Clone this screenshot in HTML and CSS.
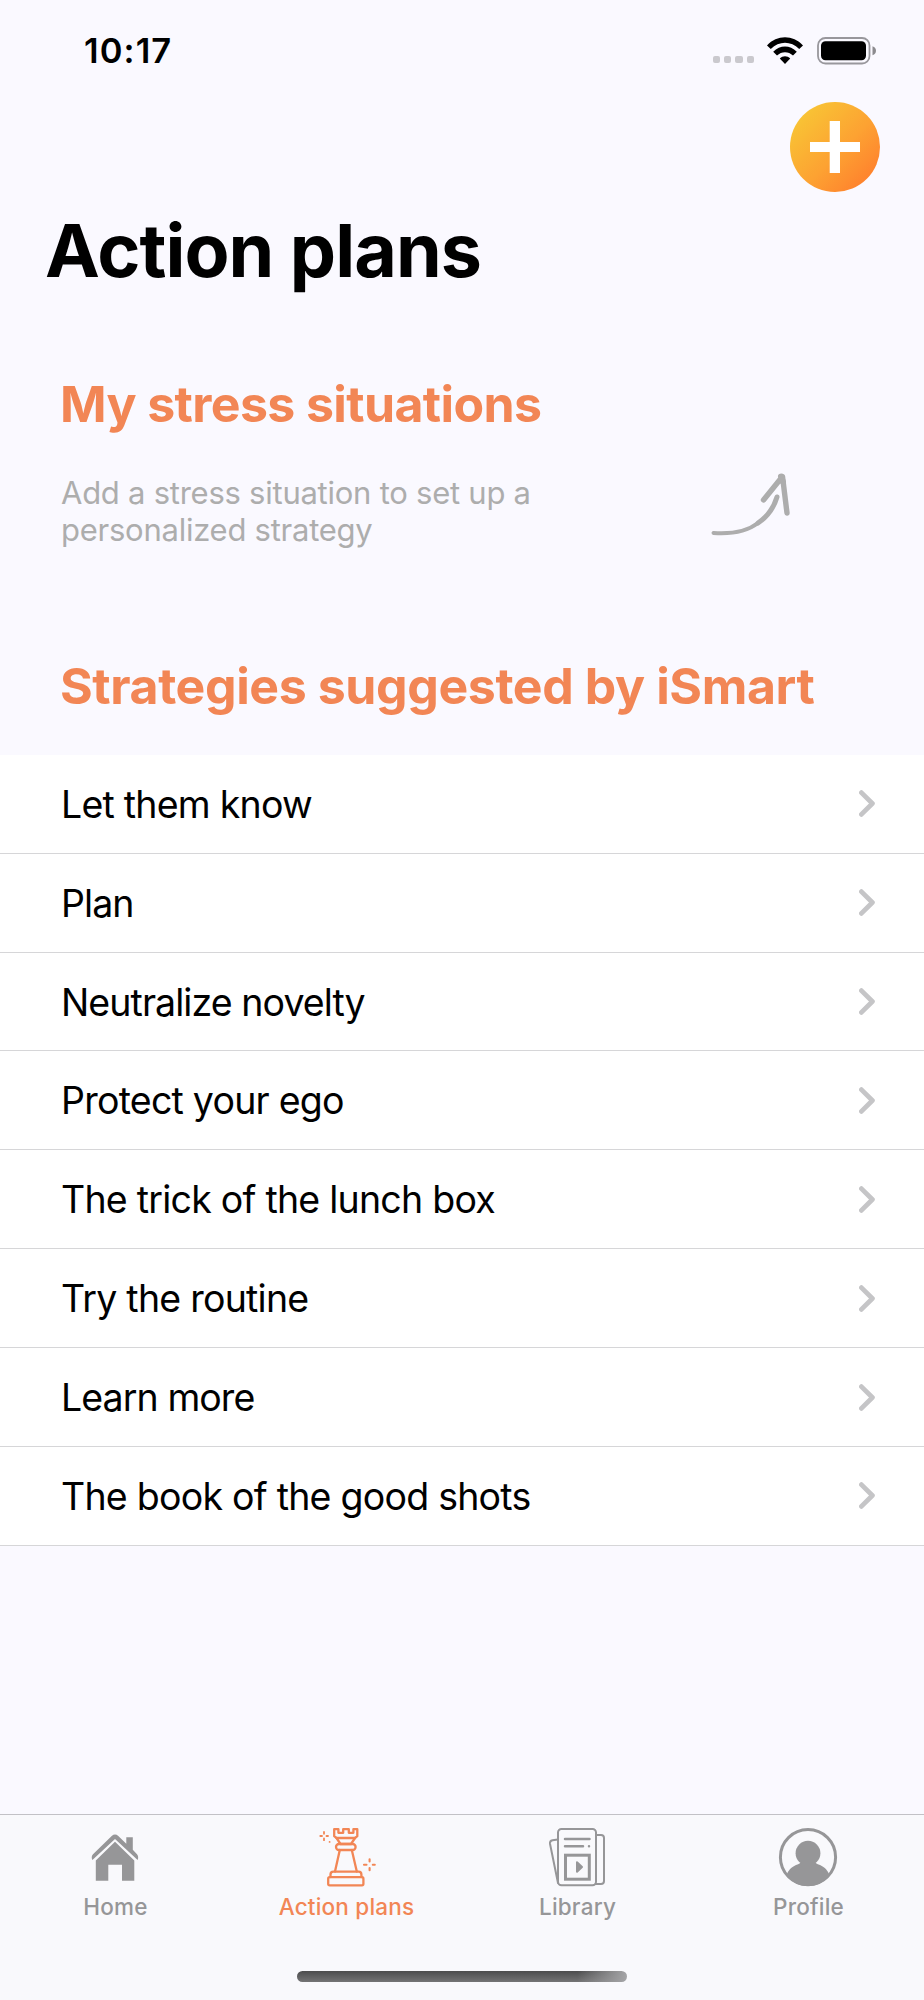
FILE: index.html
```
<!DOCTYPE html>
<html lang="en">
<head>
    <meta charset="UTF-8">
    <meta name="viewport" content="width=device-width, initial-scale=1.0">
    <title>Action plans</title>

    <link rel="stylesheet" href="styles.css">
</head>
<body>
    <div class="screen">
        <div class="status-bar">
            <span class="time">10:17</span>
            <div class="status-icons">
                <div class="signal"><i></i><i></i><i></i><i></i></div>
                <svg class="wifi" width="36" height="28" viewBox="0 0 36 28">
                    <path d="M0 8.5 C10 -2.4 26 -2.4 36 8.5 L32.2 12 C24 3.7 12 3.7 3.8 12 Z"/>
                    <path d="M6.2 14.8 C13 7.7 23 7.7 29.8 14.8 L26 18.5 C21.5 14 14.5 14 10 18.5 Z"/>
                    <path d="M12.8 21.5 C15.8 18.5 20.2 18.5 23.2 21.5 L18 27 Z"/>
                </svg>
                <svg class="battery" width="60" height="28" viewBox="0 0 60 28">
                    <rect x="1" y="1" width="51.5" height="25.5" rx="7.5" fill="none" stroke="#98979c" stroke-width="1.8"/>
                    <rect x="4" y="4.3" width="45" height="19" rx="4.5"/>
                    <path d="M55.5 9.2 Q59 10.5 59 13.8 Q59 17 55.5 18.2 Z" fill="#8b8a8e"/>
                </svg>
            </div>
        </div>

        <div class="toolbar">
            <button class="add-button" aria-label="Add">
                <svg width="50" height="52" viewBox="0 0 50 52">
                    <path d="M19.7 0H30V21H50V31H30V52H19.7V31H0V21H19.7Z" fill="#fff"/>
                </svg>
            </button>
        </div>
        <h1>Action plans</h1>

        <h2>My stress situations</h2>
        <div class="hint">
            <p>Add a stress situation to set up a<br>personalized strategy</p>
            <svg width="82" height="70" viewBox="0 0 82 70" fill="none" stroke="#adadad" stroke-linecap="round" stroke-linejoin="round">
                <path d="M73 31 C70 41 63 51 54 57" stroke-width="5"/>
                <path d="M9.5 67 C31 68.5 45 64 54 57" stroke-width="4"/>
                <path d="M59.5 34 L78.5 10.5 L83 47" stroke-width="5.4"/>
                <path d="M77 10.5 L79 16" stroke-width="6"/>
            </svg>
        </div>

        <h2 class="suggested">Strategies suggested by iSmart</h2>
        <ul class="list">
            <li>Let them know<svg class="chevron" viewBox="0 0 16 27"><path d="M2.4 2.6L13.4 13.5L2.4 24.4"/></svg></li>
            <li class="tight">Plan<svg class="chevron" viewBox="0 0 16 27"><path d="M2.4 2.6L13.4 13.5L2.4 24.4"/></svg></li>
            <li class="tight">Neutralize novelty<svg class="chevron" viewBox="0 0 16 27"><path d="M2.4 2.6L13.4 13.5L2.4 24.4"/></svg></li>
            <li>Protect your ego<svg class="chevron" viewBox="0 0 16 27"><path d="M2.4 2.6L13.4 13.5L2.4 24.4"/></svg></li>
            <li>The trick of the lunch box<svg class="chevron" viewBox="0 0 16 27"><path d="M2.4 2.6L13.4 13.5L2.4 24.4"/></svg></li>
            <li>Try the routine<svg class="chevron" viewBox="0 0 16 27"><path d="M2.4 2.6L13.4 13.5L2.4 24.4"/></svg></li>
            <li class="tight">Learn more<svg class="chevron" viewBox="0 0 16 27"><path d="M2.4 2.6L13.4 13.5L2.4 24.4"/></svg></li>
            <li>The book of the good shots<svg class="chevron" viewBox="0 0 16 27"><path d="M2.4 2.6L13.4 13.5L2.4 24.4"/></svg></li>
        </ul>

        <nav class="tab-bar">
            <div class="tabs">
                <a class="tab">
                    <svg width="60" height="60" viewBox="0 0 60 60" fill="#969698">
                        <path d="M30 14.8 L49.3 33.5 V53.7 H37 V37.8 H23.3 V53.7 H10.8 V33.5 Z"/>
                        <path d="M26.7 9 Q30 6.1 33.3 9 L41.3 16.7 V10.2 H47.8 V22.8 L52 27.2 Q54 29.7 52.6 33 L30 11.9 L7.4 33 Q5.8 29.7 8 27.2 Z"/>
                    </svg>
                    <span>Home</span>
                </a>
                <a class="tab active">
                    <svg width="60" height="60" viewBox="0 0 60 60" fill="none" stroke="#f28655" stroke-width="2.3" stroke-linejoin="round" stroke-linecap="round">
                        <path d="M18.2 2.2 H22.4 V5.8 H27.2 V2.2 H32.8 V5.8 H37.4 V2.2 H41.3 V9.2 L39 11 H20.5 L18.2 9.2 Z"/>
                        <path d="M20.5 11 L24.5 17 H35 L39 11"/>
                        <rect x="20" y="17" width="19.6" height="6" rx="3"/>
                        <path d="M23.8 23 L19 44.5 M35.8 23 L40.8 44.5"/>
                        <path d="M14.5 50 V47.5 Q14.5 44.6 17.4 44.6 H42.6 Q45.4 44.6 45.4 47.5 V50"/>
                        <path d="M13.7 50.2 H46 Q47.4 50.2 47.4 51.8 V57 Q47.4 58.3 46 58.3 H13.7 Q12.2 58.3 12.2 57 V51.8 Q12.2 50.2 13.7 50.2 Z"/>
                        <path d="M8 5 V6.8 M8 11.5 V13.2 M4.3 9 H6 M10.5 9 H12 M13.6 14.8 V14.9" stroke-width="1.8"/>
                        <path d="M53.6 32.2 V34.4 M53.6 41 V43.2 M48 37.7 H50.5 M56.8 37.7 H58.8" stroke-width="2.1"/>
                    </svg>
                    <span>Action plans</span>
                </a>
                <a class="tab">
                    <svg width="60" height="60" viewBox="0 0 60 60" fill="none" stroke="#969698" stroke-width="2" stroke-linejoin="round" stroke-linecap="round">
                        <rect x="11" y="2" width="38" height="56.2" rx="3.5"/>
                        <path d="M10.8 12.4 L5.5 13.2 Q2.6 13.8 3 16.7 L11 56"/>
                        <path d="M49.2 8 H54 Q57 8 57 11 V54 Q57 57 54 57 H48.5"/>
                        <path d="M18 12 H42.5 M18 19.2 H36 M42 19.2 V19.25" stroke-width="2.5"/>
                        <rect x="18.5" y="28.2" width="23.8" height="24" stroke-width="3" stroke-linejoin="miter"/>
                        <path d="M30 35.3 V44.8 L35 40 Z" fill="#969698"/>
                    </svg>
                    <span>Library</span>
                </a>
                <a class="tab">
                    <svg width="60" height="60" viewBox="0 0 60 60" fill="#969698">
                        <circle cx="30" cy="30.2" r="27.6" fill="none" stroke="#969698" stroke-width="3"/>
                        <circle cx="30" cy="26.2" r="12.4"/>
                        <path d="M24 34 C23.5 36 21 36.8 18 38 C13 40.5 10 43.5 8.5 48.5 C14 56 22 59 30 59 C38 59 46 56 51.5 48.5 C50 43.5 47 40.5 42 38 C39 36.8 36.5 36 36 34 Z"/>
                    </svg>
                    <span>Profile</span>
                </a>
            </div>
            <div class="home-indicator"></div>
        </nav>
    </div>
</body>
</html>
```
FILE: styles.css
```
* {
    box-sizing: border-box;
}
body {
    margin: 0;
    background-color: #faf9ff;
    font-family: Inter, "Liberation Sans", sans-serif;
    color: #000;
}
.screen {
    width: 924px;
    height: 2000px;
    display: flex;
    flex-direction: column;
    overflow: hidden;
}
.status-bar {
    height: 102px;
    padding: 0 47px 0 84px;
    display: flex;
    justify-content: space-between;
    align-items: center;
}
.time {
    margin-bottom: 2px;
    font-size: 34.5px;
    font-weight: 600;
    letter-spacing: 1.1px;
}
.status-icons {
    display: flex;
    align-items: center;
}
.signal {
    display: flex;
    gap: 4px;
    margin: 17px 13px 0 0;
}
.signal i {
    width: 7.3px;
    height: 7.3px;
    border-radius: 2px;
    background-color: #cac9ce;
}
.battery {
    margin-left: 14px;
}
.toolbar {
    display: flex;
    justify-content: flex-end;
    padding-right: 44.5px;
}
.add-button {
    width: 89.5px;
    height: 90px;
    padding: 0;
    border: none;
    border-radius: 50%;
    background: linear-gradient(135deg, #f8c635 10%, #fda232 55%, #ff7a2c 95%);
    display: flex;
    justify-content: center;
    align-items: center;
}
h1 {
    margin: 15px 0 0 45px;
    font-size: 73.5px;
    line-height: 88px;
    font-weight: 700;
    letter-spacing: -0.95px;
}
h2 {
    margin: 79px 0 0 60px;
    font-size: 50px;
    line-height: 60px;
    font-weight: 700;
    letter-spacing: -0.62px;
    color: #f28655;
    white-space: nowrap;
}
.hint {
    display: flex;
    justify-content: space-between;
    padding: 0 138px 0 61px;
    margin-top: 40px;
    height: 75px;
}
.hint p {
    margin: 0;
    font-size: 31px;
    line-height: 37px;
    letter-spacing: -0.25px;
    color: #adadad;
    white-space: nowrap;
}
.hint svg {
    margin-top: -8px;
    overflow: visible;
}
h2.suggested {
    margin-top: 107px;
    letter-spacing: -0.4px;
}
.list {
    list-style: none;
    margin: 38.8px 0 0;
    padding: 0;
    background-color: #fff;
}
.list li {
    height: 98.9px;
    padding: 1px 49px 0 61px;
    border-bottom: 1px solid #d6d6d8;
    display: flex;
    justify-content: space-between;
    align-items: center;
    font-size: 37.5px;
    letter-spacing: -0.76px;
}
.list li.tight {
    letter-spacing: -0.92px;
}
.chevron {
    width: 16px;
    height: 27px;
    margin-bottom: 1px;
    fill: none;
    stroke: #c5c5c7;
    stroke-width: 4.8;
    stroke-linecap: round;
    stroke-linejoin: round;
}
.tab-bar {
    margin-top: auto;
    height: 186px;
    border-top: 1px solid #c2c1c6;
    background-color: #f9f9fc;
    display: flex;
    flex-direction: column;
    align-items: center;
}
.tabs {
    width: 100%;
    display: grid;
    grid-template-columns: repeat(4, 1fr);
    padding-top: 12px;
}
.tab {
    display: flex;
    flex-direction: column;
    align-items: center;
    color: #969698;
    font-size: 22.5px;
    line-height: 28px;
    font-weight: 500;
    letter-spacing: 0.2px;
}
.tab svg {
    margin-right: 1px;
}
.tab span {
    margin-top: 6px;
}
.tab.active {
    color: #f28655;
}
.home-indicator {
    width: 330px;
    height: 11px;
    margin-top: 50px;
    border-radius: 6px;
    background: linear-gradient(90deg, transparent 85%, #a5a5a7), linear-gradient(#4c4c4d, #747475);
}
```
